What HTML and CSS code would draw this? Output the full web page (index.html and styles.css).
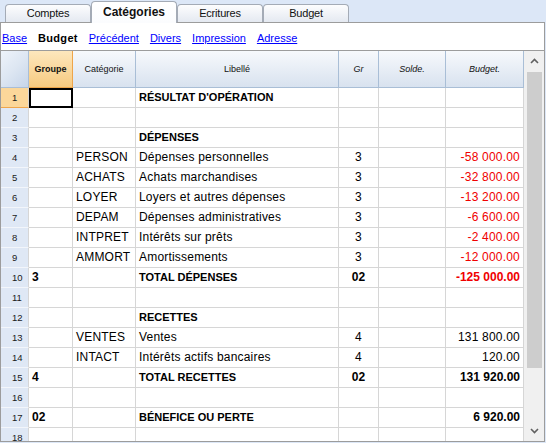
FILE: index.html
```html
<!DOCTYPE html>
<html lang="fr">
<head>
<meta charset="utf-8">
<title>Catégories</title>
<link rel="stylesheet" href="styles.css">
</head>
<body>
<div class="tabs">
  <div class="tab">Comptes</div>
  <div class="tab active">Catégories</div>
  <div class="tab">Ecritures</div>
  <div class="tab">Budget</div>
</div>
<div class="panel">
  <div class="links">
    <a href="#">Base</a>
    <span class="cur-view">Budget</span>
    <a href="#">Précédent</a>
    <a href="#">Divers</a>
    <a href="#">Impression</a>
    <a href="#">Adresse</a>
  </div>
  <div class="gridwrap">
    <div class="sheet">
      <div class="h corner"></div>
      <div class="h sel">Groupe</div>
      <div class="h">Catégorie</div>
      <div class="h">Libellé</div>
      <div class="h it">Gr</div>
      <div class="h it">Solde.</div>
      <div class="h it">Budget.</div>

      <div class="n sel">1</div><div class="c cur"></div><div class="c"></div><div class="c lb">RÉSULTAT D'OPÉRATION</div><div class="c"></div><div class="c"></div><div class="c"></div>
      <div class="n">2</div><div class="c"></div><div class="c"></div><div class="c"></div><div class="c"></div><div class="c"></div><div class="c"></div>
      <div class="n">3</div><div class="c"></div><div class="c"></div><div class="c lb">DÉPENSES</div><div class="c"></div><div class="c"></div><div class="c"></div>
      <div class="n">4</div><div class="c"></div><div class="c">PERSON</div><div class="c">Dépenses personnelles</div><div class="c ctr">3</div><div class="c"></div><div class="c num red">-58 000.00</div>
      <div class="n">5</div><div class="c"></div><div class="c">ACHATS</div><div class="c">Achats marchandises</div><div class="c ctr">3</div><div class="c"></div><div class="c num red">-32 800.00</div>
      <div class="n">6</div><div class="c"></div><div class="c">LOYER</div><div class="c">Loyers et autres dépenses</div><div class="c ctr">3</div><div class="c"></div><div class="c num red">-13 200.00</div>
      <div class="n">7</div><div class="c"></div><div class="c">DEPAM</div><div class="c">Dépenses administratives</div><div class="c ctr">3</div><div class="c"></div><div class="c num red">-6 600.00</div>
      <div class="n">8</div><div class="c"></div><div class="c">INTPRET</div><div class="c">Intérêts sur prêts</div><div class="c ctr">3</div><div class="c"></div><div class="c num red">-2 400.00</div>
      <div class="n">9</div><div class="c"></div><div class="c">AMMORT</div><div class="c">Amortissements</div><div class="c ctr">3</div><div class="c"></div><div class="c num red">-12 000.00</div>
      <div class="n">10</div><div class="c bb">3</div><div class="c"></div><div class="c lb">TOTAL DÉPENSES</div><div class="c ctr bb">02</div><div class="c"></div><div class="c num red bb">-125 000.00</div>
      <div class="n">11</div><div class="c"></div><div class="c"></div><div class="c"></div><div class="c"></div><div class="c"></div><div class="c"></div>
      <div class="n">12</div><div class="c"></div><div class="c"></div><div class="c lb">RECETTES</div><div class="c"></div><div class="c"></div><div class="c"></div>
      <div class="n">13</div><div class="c"></div><div class="c">VENTES</div><div class="c">Ventes</div><div class="c ctr">4</div><div class="c"></div><div class="c num">131 800.00</div>
      <div class="n">14</div><div class="c"></div><div class="c">INTACT</div><div class="c">Intérêts actifs bancaires</div><div class="c ctr">4</div><div class="c"></div><div class="c num">120.00</div>
      <div class="n">15</div><div class="c bb">4</div><div class="c"></div><div class="c lb">TOTAL RECETTES</div><div class="c ctr bb">02</div><div class="c"></div><div class="c num bb">131 920.00</div>
      <div class="n">16</div><div class="c"></div><div class="c"></div><div class="c"></div><div class="c"></div><div class="c"></div><div class="c"></div>
      <div class="n">17</div><div class="c bb">02</div><div class="c"></div><div class="c lb">BÉNEFICE OU PERTE</div><div class="c"></div><div class="c"></div><div class="c num bb">6 920.00</div>
      <div class="n">18</div><div class="c"></div><div class="c"></div><div class="c"></div><div class="c"></div><div class="c"></div><div class="c"></div>
    </div>
    <div class="scroll">
      <div class="sb-btn">
        <svg width="9" height="6" viewBox="0 0 9 6"><polyline points="1,5 4.5,1.5 8,5" fill="none" stroke="#606060" stroke-width="1.6"/></svg>
      </div>
      <div class="thumb"></div>
      <div class="track"></div>
      <div class="sb-btn">
        <svg width="9" height="6" viewBox="0 0 9 6"><polyline points="1,1 4.5,4.5 8,1" fill="none" stroke="#606060" stroke-width="1.6"/></svg>
      </div>
    </div>
  </div>
</div>
</body>
</html>
```
FILE: styles.css
```css
* { box-sizing: border-box; }
html, body { margin: 0; padding: 0; }
body {
  width: 546px;
  height: 443px;
  overflow: hidden;
  background: #dce7f7;
  font-family: "Liberation Sans", Arial, sans-serif;
  color: #000;
}

/* Tabs */
.tabs {
  display: flex;
  align-items: flex-end;
  height: 22px;
  padding-left: 5px;
}
.tab {
  width: 86px;
  height: 18px;
  border: 1px solid #a4abb6;
  border-bottom: none;
  border-radius: 4px 4px 0 0;
  background: linear-gradient(#fdfdfe, #e4e9f1);
  font-size: 11px;
  letter-spacing: -0.2px;
  line-height: 17px;
  text-align: center;
  color: #111;
}
.tab.active {
  height: 22px;
  margin-bottom: -1px;
  background: linear-gradient(#ffffff, #fbfcfe);
  font-weight: bold;
  font-size: 12px;
  letter-spacing: 0;
  line-height: 20px;
  position: relative;
  z-index: 1;
}

/* Panel */
.panel {
  width: 545px;
  height: 420px;
  border: 1px solid #9c9c9c;
  background: #fff;
}
.links {
  height: 27px;
  display: flex;
  align-items: center;
  gap: 11px;
  padding: 3px 0 0 1px;
  font-size: 11px;
}
.links a {
  color: #0000ff;
  text-decoration: underline;
}
.links .cur-view {
  font-weight: bold;
  letter-spacing: 0.3px;
}

.gridwrap {
  display: flex;
  height: 391px;
  border-top: 1px solid #9c9c9c;
  overflow: hidden;
}

.sheet {
  width: 523px;
  flex: none;
  display: grid;
  grid-template-columns: 28px 44px 63px 203px 40px 67px 78px;
  grid-template-rows: 37px;
  grid-auto-rows: 20px;
  align-content: start;
  overflow: hidden;
}

/* Header */
.h {
  background: linear-gradient(#f7f9fc, #d8e2ef);
  border-right: 1px solid #a9bed6;
  border-bottom: 1px solid #a9bed6;
  font-size: 9px;
  display: flex;
  align-items: center;
  justify-content: center;
  color: #111;
}
.h.it { font-style: italic; }
.h.corner {
  background: linear-gradient(135deg, #eef3fa 0%, #dde6f2 50%, #c6d5e9 100%);
}
.h.sel {
  background: linear-gradient(#fde7bd, #f7ca80);
  border-right-color: #eea54a;
  border-bottom-color: #eea54a;
  font-weight: bold;
  font-size: 9px;
}

/* Row numbers */
.n {
  background: #dfe8f5;
  border-right: 1px solid #d6d6d6;
  border-bottom: 1px solid #f3f6fb;
  font-size: 9.5px;
  line-height: 19px;
  padding-left: 11px;
  color: #1a1a1a;
}
.n.sel {
  background: #fbd79a;
  border-bottom-color: #efa64c;
}

/* Cells */
.c {
  border-right: 1px solid #d6d6d6;
  border-bottom: 1px solid #d6d6d6;
  padding: 0 3px;
  font-size: 12px;
  letter-spacing: 0.2px;
  line-height: 19px;
  white-space: nowrap;
  overflow: hidden;
}
.c.cur {
  outline: 2px solid #000;
  outline-offset: -2px;
}
.c.lb {
  font-weight: bold;
  font-size: 11px;
  letter-spacing: 0;
}
.c.bb { font-weight: bold; letter-spacing: 0; }
.c.ctr { text-align: center; }
.c.num { text-align: right; }
.c.red { color: #f00000; }

/* Scrollbar */
.scroll {
  width: 20px;
  flex: none;
  background: #f0f0f0;
  display: flex;
  flex-direction: column;
  align-items: center;
}
.sb-btn {
  height: 20px;
  width: 100%;
  display: flex;
  align-items: center;
  justify-content: center;
  flex: none;
}
.thumb {
  width: 15px;
  height: 296px;
  margin-top: 1px;
  background: #cdcdcd;
  flex: none;
}
.track { flex: 1; }
```
